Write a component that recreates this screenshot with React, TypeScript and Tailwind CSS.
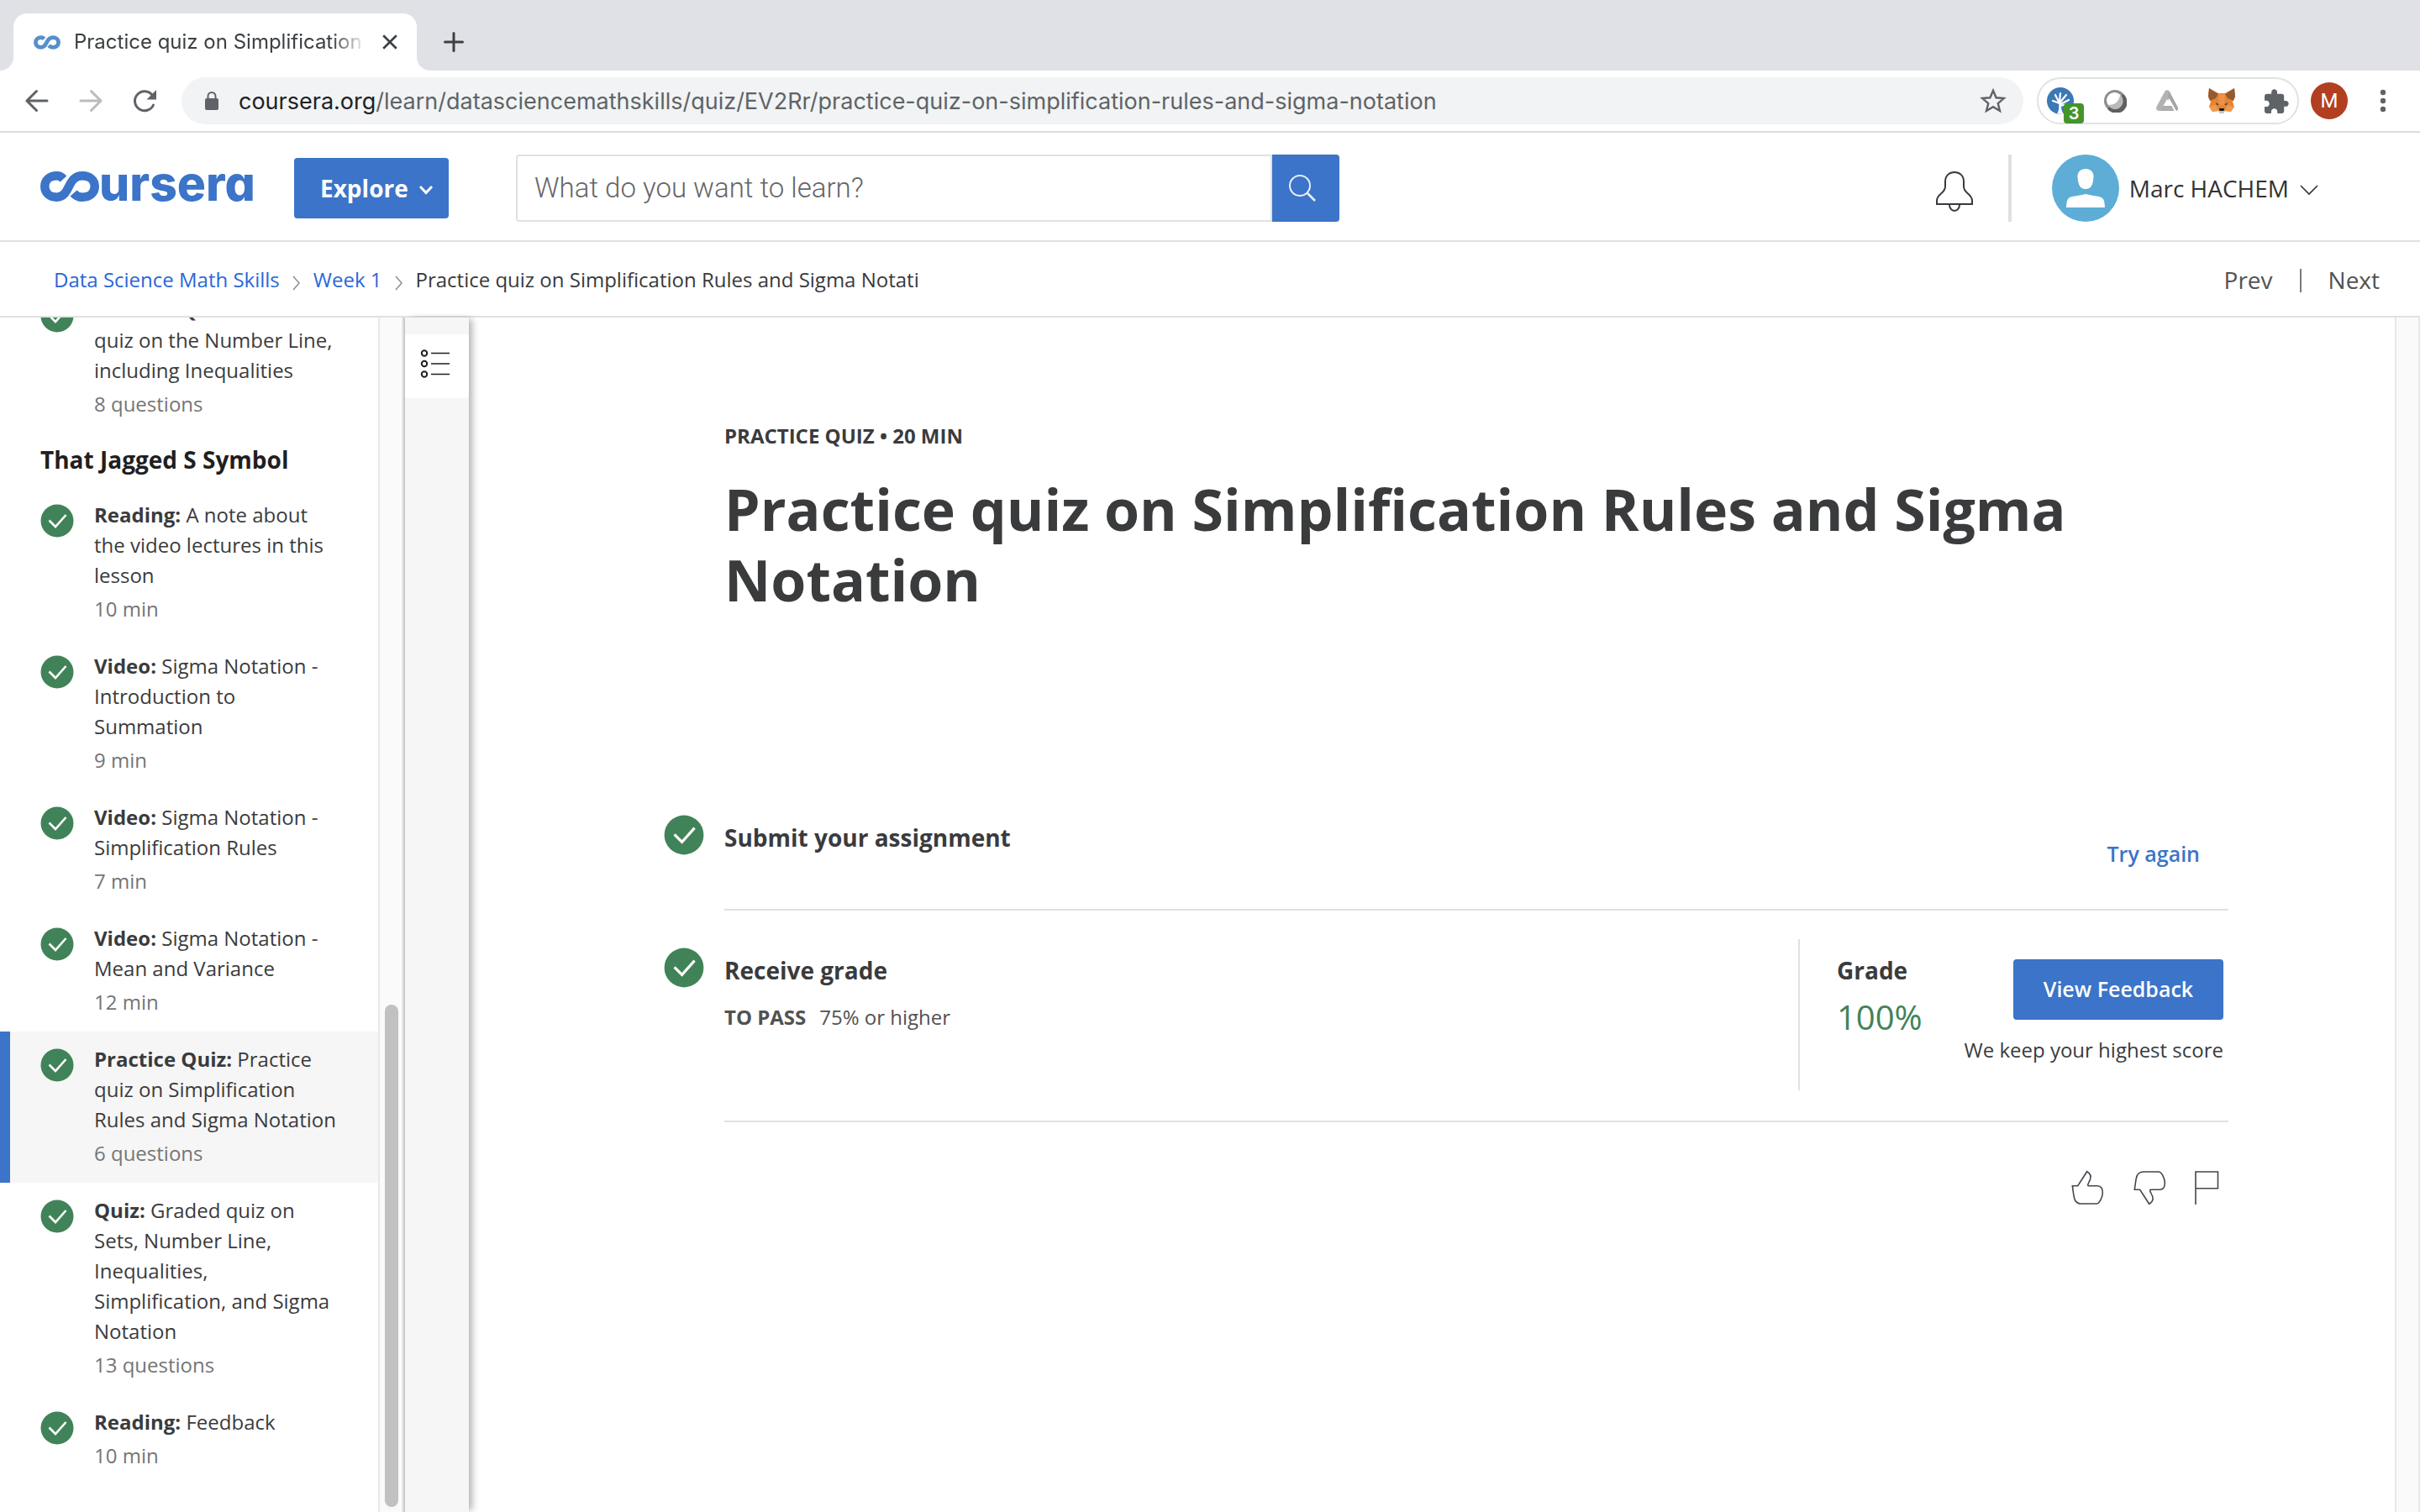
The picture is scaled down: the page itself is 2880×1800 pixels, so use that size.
import React from "react";

type Lesson = { kind: string; title: string; meta: string; active?: boolean };

const previousLesson: Lesson = {
  kind: "Practice Quiz:",
  title: "Practice quiz on the Number Line, including Inequalities",
  meta: "8 questions",
};

const lessons: Lesson[] = [
  { kind: "Reading:", title: "A note about the video lectures in this lesson", meta: "10 min" },
  { kind: "Video:", title: "Sigma Notation - Introduction to Summation", meta: "9 min" },
  { kind: "Video:", title: "Sigma Notation - Simplification Rules", meta: "7 min" },
  { kind: "Video:", title: "Sigma Notation - Mean and Variance", meta: "12 min" },
  {
    kind: "Practice Quiz:",
    title: "Practice quiz on Simplification Rules and Sigma Notation",
    meta: "6 questions",
    active: true,
  },
  {
    kind: "Quiz:",
    title: "Graded quiz on Sets, Number Line, Inequalities, Simplification, and Sigma Notation",
    meta: "13 questions",
  },
  { kind: "Reading:", title: "Feedback", meta: "10 min" },
];

function InfinityMark({ className }: { className: string }) {
  return (
    <svg viewBox="0 0 70 36" className={className} fill="none" stroke="currentColor" strokeWidth="10.500" aria-hidden="true">
      <path d="M27.5 9C25 6.300 22.5 5.300 19.5 5.300C11 5.300 5.300 10.500 5.300 18C5.300 25.5 11 30.700 19.5 30.700C27.500 30.700 30.5 25 34 18C37.5 11 41 5.300 50 5.300C59 5.300 64.700 10.5 64.700 18C64.700 25.5 59 30.700 50 30.700C45.5 30.700 42.5 29.5 39.5 26" />
    </svg>
  );
}

function CheckCircle({ className }: { className: string }) {
  return (
    <svg viewBox="0 0 40 40" className={className} role="img" aria-label="Completed">
      <circle cx="20" cy="20" r="19.5" fill="#418358" />
      <path d="M10.5 19.5L18 27L30.5 13" fill="none" stroke="#fff" strokeWidth="2.6" />
    </svg>
  );
}

function TabStrip() {
  return (
    <div className="flex h-[84px] shrink-0 items-end bg-[#dfe1e6]">
      <div className="size-4 bg-white">
        <div className="size-4 rounded-br-2xl bg-[#dfe1e6]" />
      </div>
      <div className="flex h-[68px] w-[480px] items-center rounded-t-2xl bg-white pr-4 pl-6">
        <InfinityMark className="h-[17px] w-8 text-[#5590cc]" />
        <span className="ml-4 flex-1 overflow-hidden whitespace-nowrap font-[Inter] text-2xl text-[#3c4043] [mask-image:linear-gradient(to_right,#000_88%,transparent)]">
          Practice quiz on Simplification Rules
        </span>
        <button type="button" aria-label="Close tab" className="ml-3 p-1">
          <svg viewBox="0 0 20 20" className="size-6" stroke="#3c4043" strokeWidth="2.2">
            <path d="M3.500 3.500L16.500 16.500M16.500 3.500L3.500 16.500" />
          </svg>
        </button>
      </div>
      <div className="size-4 bg-white">
        <div className="size-4 rounded-bl-2xl bg-[#dfe1e6]" />
      </div>
      <button type="button" aria-label="New tab" className="mb-[22px] ml-4">
        <svg viewBox="0 0 24 24" className="size-6" stroke="#3c4043" strokeWidth="3" strokeLinecap="round">
          <path d="M12 1.5V22.500M1.5 12H22.500" />
        </svg>
      </button>
    </div>
  );
}

function Extensions() {
  return (
    <div className="ml-4 flex h-14 w-[312px] items-center justify-between rounded-full border-2 border-[#e1e2e4] pr-[10px] pl-[10px]">
      <button type="button" aria-label="Extension with 3 items" className="relative">
        <svg viewBox="0 0 32 32" className="size-8">
          <circle cx="16" cy="16" r="16" fill="#3a78b8" />
          <path
            d="M15 19L7 16M14.500 18L10 9M15 17L16 7M15.500 18L23 9M16 20L26 15M16 22L24 20"
            fill="none"
            stroke="#fff"
            strokeWidth="2.2"
            strokeLinecap="round"
          />
          <path d="M12 31.500C15 27 14 22 14.500 18H17C16.500 23 17 28 20 32Z" fill="#fff" />
        </svg>
        <span className="absolute top-[19px] left-5 flex h-6 w-6 items-center justify-center rounded bg-[#43952b] font-[Inter] text-xl font-semibold text-white">
          3
        </span>
      </button>
      <button type="button" aria-label="Ring extension">
        <svg viewBox="0 0 28 28" className="size-7">
          <circle cx="14" cy="14" r="13" fill="#8d8d8d" />
          <path d="M24 6A13 13 0 1 1 5 23.500Z" fill="#5f5f5f" />
          <circle cx="13.500" cy="13.500" r="9.500" fill="#fff" />
          <path d="M20 7A9.500 9.500 0 1 1 5.500 18.500C13 20 19 15 20 7Z" fill="#b9b9b9" />
        </svg>
      </button>
      <button type="button" aria-label="Drive extension">
        <svg viewBox="0 0 28 28" className="size-7">
          <path d="M11.500 2.500Q14 0 16.500 2.500L19 7L8 26H4Q0 25 1.500 21Z" fill="#b2b2b2" />
          <path d="M16.500 2.500L27 22Q27.500 25 25 26L15 8.500Z" fill="#a5a5a5" />
          <path d="M10 20H19.500L22.500 26H5.500Z" fill="#adadad" />
          <path d="M14 12L18.500 20H9.500Z" fill="#fff" />
        </svg>
      </button>
      <button type="button" aria-label="Fox wallet">
        <svg viewBox="0 0 32 30" className="h-[30px] w-8">
          <path d="M1 0L12 6H20L31 0L32 11L29 16L31 22L27 28L20 27L18 30H14L12 27L5 28L1 22L3 16L0 11Z" fill="#e58434" />
          <path d="M1 0L12 7L9 12L2 15L0 9Z" fill="#945a31" />
          <path d="M31 0L20 7L23 12L30 15L32 9Z" fill="#945a31" />
          <path d="M12 7H20L19 20H13Z" fill="#ef9146" />
          <path d="M1 22L9 20L12 27L5 28ZM31 22L23 20L20 27L27 28Z" fill="#f09a50" />
          <path d="M9 17L13 19.500L10 20ZM23 17L19 19.500L22 20Z" fill="#3b3f4c" />
          <path d="M12 26H20L18 30H14Z" fill="#d5c4b6" />
          <path d="M13 24H19L18.500 27H13.500Z" fill="#17120e" />
        </svg>
      </button>
      <button type="button" aria-label="Extensions">
        <svg viewBox="1.500 0 21.500 22" className="size-[30px]" fill="#5f6368">
          <path d="M20.500 11H19V7c0-1.100-.9-2-2-2h-4V3.500C13 2.120 11.880 1 10.500 1S8 2.120 8 3.500V5H4c-1.100 0-1.990.9-1.990 2v3.800H3.500c1.490 0 2.700 1.210 2.700 2.700s-1.210 2.700-2.700 2.700H2V20c0 1.100.9 2 2 2h3.800v-1.500c0-1.490 1.210-2.700 2.700-2.700 1.490 0 2.700 1.210 2.700 2.700V22H17c1.100 0 2-.9 2-2v-4h1.500c1.380 0 2.500-1.120 2.500-2.500S21.880 11 20.500 11z" />
        </svg>
      </button>
    </div>
  );
}

function Toolbar() {
  return (
    <div className="flex h-[74px] shrink-0 items-center border-b-2 border-[#dadce1] pr-[30px] pl-7">
      <div className="flex gap-8">
        <button type="button" aria-label="Back">
          <svg viewBox="0 0 32 32" className="size-8" fill="none" stroke="#5f6368" strokeWidth="3" strokeLinecap="round">
            <path d="M28 16H4M15.500 4.500L4 16L15.500 27.500" />
          </svg>
        </button>
        <button type="button" aria-label="Forward">
          <svg viewBox="0 0 32 32" className="size-8" fill="none" stroke="#babcbe" strokeWidth="3" strokeLinecap="round">
            <path d="M4 16H28M16.500 4.500L28 16L16.500 27.500" />
          </svg>
        </button>
        <button type="button" aria-label="Reload">
          <svg viewBox="0 0 32 32" className="size-8" fill="none" stroke="#5f6368" strokeWidth="3" strokeLinecap="round">
            <path d="M26.500 21A11.500 11.500 0 1 1 24.500 8.500" />
            <path d="M30 3V14.500H18.500Z" fill="#5f6368" stroke="none" />
          </svg>
        </button>
      </div>
      <div className="ml-7 flex h-14 flex-1 items-center rounded-full bg-[#f1f3f4] pr-5 pl-6">
        <svg viewBox="0 0 24 24" className="size-6" aria-hidden="true">
          <rect x="4" y="9" width="16" height="14" rx="2" fill="#5f6368" />
          <path d="M7.500 10V6.500a4.500 4.500 0 0 1 9 0V10" fill="none" stroke="#5f6368" strokeWidth="2" />
        </svg>
        <a href="#address" className="ml-5 flex-1 pt-0.5 whitespace-nowrap font-[Inter] text-[27px] text-[#606366]">
          <span className="text-[#202124]">coursera.org</span>
          /learn/datasciencemathskills/quiz/EV2Rr/practice-quiz-on-simplification-rules-and-sigma-notation
        </a>
        <button type="button" aria-label="Bookmark this page">
          <svg viewBox="0 0 24 24" className="size-8" fill="none" stroke="#5f6368" strokeWidth="1.800">
            <path d="M12 2.800L14.700 9.200L21.600 9.800L16.300 14.300L18 21L12 17.400L6 21L7.700 14.300L2.400 9.800L9.300 9.200Z" />
          </svg>
        </button>
      </div>
      <Extensions />
      <button type="button" aria-label="Profile" className="ml-[14px] flex size-11 items-center justify-center rounded-full bg-[#b13f20] font-[Roboto] text-2xl text-white">
        M
      </button>
      <button type="button" aria-label="Browser menu" className="ml-7">
        <svg viewBox="0 0 28 28" className="size-7" fill="#5f6368">
          <circle cx="14" cy="4" r="3.200" />
          <circle cx="14" cy="14" r="3.200" />
          <circle cx="14" cy="24" r="3.200" />
        </svg>
      </button>
    </div>
  );
}

function SiteHeader() {
  return (
    <header className="flex h-[130px] shrink-0 items-center border-b-2 border-[#e1e1e1] pt-1 pl-12">
      <a href="#home" aria-label="coursera" className="flex items-center pb-1 text-[#3b74c8]">
        <InfinityMark className="h-9 w-[70px]" />
        <span className="flex h-9 w-[184px] items-center pb-[6px] font-[Inter] text-[57px] leading-[52px] font-extrabold [font-feature-settings:'cv11']">ursera</span>
      </a>
      <button type="button" className="ml-12 flex h-[72px] w-[184px] items-center justify-between rounded bg-[#3b74c8] pr-[18px] pl-[31px] text-[28px] font-bold text-white">
        Explore
        <svg viewBox="0 0 18 18" className="mt-1 size-[18px]" fill="none" stroke="#fff" strokeWidth="3">
          <path d="M2 5L9 12.500L16 5" />
        </svg>
      </button>
      <form className="ml-20 flex h-20 w-[980px]" role="search">
        <input
          type="search"
          aria-label="What do you want to learn?"
          placeholder="What do you want to learn?"
          className="min-w-0 flex-1 rounded-l border-2 border-[#e1e1e1] px-5 font-[Roboto] text-[33px] font-light outline-none placeholder:text-[#666]"
        />
        <button type="button" aria-label="Search" className="flex w-20 items-center justify-center rounded-r bg-[#3b74c8] pr-2">
          <svg viewBox="0 0 32 32" className="size-8" fill="none" stroke="#e8eef8" strokeWidth="2">
            <circle cx="13" cy="13" r="12" />
            <path d="M21.500 21.500L31 31" strokeWidth="2.600" />
          </svg>
        </button>
      </form>
      <button type="button" aria-label="Notifications" className="ml-auto mt-2">
        <svg viewBox="0 0 44 48" className="h-12 w-11" fill="none" stroke="#373a3f" strokeWidth="2">
          <path d="M1 39V35C1 31 3 29 6 26.500C9 24 11 22 11 18V12C11 5 16 1 22 1S33 5 33 12V18C33 22 35 24 38 26.500C41 29 43 31 43 35V39Z" />
          <path d="M16 40A6 7 0 0 0 28 40" />
        </svg>
      </button>
      <div className="mr-12 ml-[42px] h-20 w-1 bg-[#e0e0e0]" />
      <button type="button" className="mr-[120px] flex items-center text-[28px] text-[#333]">
        <svg viewBox="0 0 80 80" className="size-20" aria-hidden="true">
          <circle cx="40" cy="40" r="40" fill="#5dadd7" />
          <path d="M40 17C46 17 50 21 49.500 27C49 33 48 41 40 41S31 33 30.500 27C30 21 34 17 40 17Z" fill="#fff" />
          <path d="M17 63C17.500 55 18 51.500 24 50L33 48.500L40 47L47 48.500L56 50C62 51.500 62.500 55 63 63Z" fill="#fff" />
        </svg>
        <span className="ml-3">Marc HACHEM</span>
        <svg viewBox="0 0 24 24" className="mt-1 ml-3 size-6" fill="none" stroke="#333" strokeWidth="1.600">
          <path d="M2 7L12 17L22 7" />
        </svg>
      </button>
    </header>
  );
}

function CrumbArrow() {
  return (
    <svg viewBox="0 0 12 20" className="mx-[14px] mt-2 h-5 w-3" fill="none" stroke="#8a8a8a" strokeWidth="1.400" aria-hidden="true">
      <path d="M2 2L9 10L2 18" />
    </svg>
  );
}

function Breadcrumbs() {
  return (
    <nav className="flex h-[90px] shrink-0 items-center border-b-2 border-[#e1e1e1] pt-0.5 pr-12 pl-16 text-2xl">
      <a href="#course" className="text-[#2a67d8]">Data Science Math Skills</a>
      <CrumbArrow />
      <a href="#week" className="text-[#2a67d8]">Week 1</a>
      <CrumbArrow />
      <span className="text-[#373a3c]">Practice quiz on Simplification Rules and Sigma Notati</span>
      <div className="ml-auto flex items-center pt-0.5 text-[28px] text-[#525252]">
        <a href="#prev">Prev</a>
        <span className="mx-8 h-7 w-0.5 bg-[#7c7c7c]" />
        <a href="#next">Next</a>
      </div>
    </nav>
  );
}

function LessonItem({ lesson }: { lesson: Lesson }) {
  return (
    <li>
      <a
        href="#lesson"
        className={
          lesson.active
            ? "flex border-l-12 border-[#3b74c8] bg-[#f6f6f6] pt-[15px] pr-12 pb-[17px] pl-9 text-2xl leading-9"
            : "flex border-l-12 border-transparent pt-[15px] pr-12 pb-[17px] pl-9 text-2xl leading-9"
        }
      >
        <CheckCircle className="mt-[5px] size-10 shrink-0" />
        <span className="ml-6 flex flex-col gap-1">
          <span className="text-[#3a3b3d]">
            <b className="font-bold">{lesson.kind}</b> {lesson.title}
          </span>
          <span className="text-[#757575]">{lesson.meta}</span>
        </span>
      </a>
    </li>
  );
}

function Sidebar() {
  return (
    <aside className="flex w-[482px] shrink-0 border-r-2 border-[#cacaca]">
      <div className="flex flex-1 flex-col justify-end overflow-hidden pb-8">
        <ul className="shrink-0">
          <LessonItem lesson={previousLesson} />
        </ul>
        <h2 className="h-16 shrink-0 pt-[11px] pl-12 text-[28px] leading-10 font-bold text-[#1f1f1f]">That Jagged S Symbol</h2>
        <ul className="shrink-0">
          {lessons.map((lesson) => (
            <LessonItem key={lesson.title} lesson={lesson} />
          ))}
        </ul>
      </div>
      <div className="flex w-[30px] flex-col justify-end border-x-2 border-[#e8e8e8] bg-[#fafafa] pr-1 pb-[6px] pl-[6px]">
        <div className="h-[598px] w-4 rounded-full bg-[#c1c1c1]" />
      </div>
    </aside>
  );
}

function StepRows() {
  return (
    <section>
      <div className="flex">
        <CheckCircle className="size-12 shrink-0" />
        <div className="ml-6 flex h-[114px] flex-1 justify-between border-b-2 border-[#e1e1e1]">
          <h2 className="pt-[7px] text-[28px] leading-10 font-bold">Submit your assignment</h2>
          <a href="#retry" className="pt-[26px] pr-[34px] text-[25px] leading-10 font-semibold text-[#3b74c8]">Try again</a>
        </div>
      </div>
      <div className="flex">
        <CheckCircle className="mt-11 size-12 shrink-0" />
        <div className="ml-6 flex h-[252px] flex-1 justify-between border-b-2 border-[#e1e1e1]">
          <div className="pt-[51px]">
            <h2 className="text-[28px] leading-10 font-bold">Receive grade</h2>
            <p className="mt-5 text-2xl text-[#525252]">
              <b className="mr-4 font-bold">TO PASS</b>75% or higher
            </p>
          </div>
          <div className="mt-[34px] flex h-[180px] w-[512px] justify-between border-l-2 border-[#e1e1e1] pr-[6px] pl-11">
            <div className="pt-[17px]">
              <h2 className="text-[28px] leading-10 font-bold">Grade</h2>
              <p className="mt-3 text-[40px] leading-12 text-[#418358]">100%</p>
            </div>
            <div className="flex flex-col items-end pt-6">
              <button type="button" className="h-[72px] w-[250px] rounded bg-[#3b74c8] text-[25px] font-semibold text-white">
                View Feedback
              </button>
              <p className="mt-5 text-2xl whitespace-nowrap">We keep your highest score</p>
            </div>
          </div>
        </div>
      </div>
      <div className="mt-14 flex justify-end gap-[30px] pr-[10px]">
        <button type="button" aria-label="Like">
          <svg viewBox="0 0 44 44" className="size-11" fill="none" stroke="#42474d" strokeWidth="1.600">
            <path d="M4.300 19.700H10.700L21.700 2.700C25.500 5 27 8 25.500 12C24 16 21 19.700 24 19.700H34C38.500 19.700 40.500 23 40.300 28C40.300 33 36.500 41 33 41H14.700C10 41 7.500 38 6.500 34C5.500 30 5 24 4.300 19.700Z" />
          </svg>
        </button>
        <button type="button" aria-label="Dislike">
          <svg viewBox="0 0 44 44" className="size-11" fill="none" stroke="#42474d" strokeWidth="1.600">
            <path d="M4.300 24.300H10.700L21.700 41.300C25.500 39 27 36 25.500 32C24 28 21 24.300 24 24.300H34C38.500 24.300 40.500 21 40.300 16C40.300 11 36.500 3 33 3H14.700C10 3 7.500 6 6.500 10C5.500 14 5 20 4.300 24.300Z" />
          </svg>
        </button>
        <button type="button" aria-label="Report">
          <svg viewBox="0 0 32 44" className="h-11 w-8" fill="none" stroke="#42474d" strokeWidth="1.600">
            <path d="M3 42V3H29.500V22.700H3" />
          </svg>
        </button>
      </div>
    </section>
  );
}

export default function App() {
  return (
    <div className="flex h-screen flex-col overflow-hidden bg-white font-['Open_Sans',sans-serif] text-[#3a3b3d]">
      <TabStrip />
      <Toolbar />
      <SiteHeader />
      <Breadcrumbs />
      <div className="flex min-h-0 flex-1">
        <Sidebar />
        <div className="relative z-10 w-[76px] shrink-0 bg-[#f6f6f6] pt-5 shadow-[6px_0_8px_-2px_rgba(0,0,0,0.3)]">
          <button type="button" aria-label="Course outline" className="flex h-[76px] w-full items-center justify-center rounded bg-white pr-1 pb-[6px]">
            <svg viewBox="0 0 36 36" className="size-9" fill="none" stroke="#1f1f1f" strokeWidth="2">
              <circle cx="5" cy="5.500" r="3.200" />
              <circle cx="5" cy="18" r="3.200" />
              <circle cx="5" cy="30.500" r="3.200" />
              <path d="M13 5.500H35M13 18H35M13 30.500H35" strokeWidth="1.600" />
            </svg>
          </button>
        </div>
        <main className="flex-1 pt-[125px] pr-[198px] pl-[232px]">
          <div className="ml-[72px]">
            <p className="text-2xl font-bold">PRACTICE QUIZ • 20 MIN</p>
            <h1 className="mt-[29px] mb-[238px] text-[68px] leading-[84px] font-bold">
              Practice quiz on Simplification Rules and Sigma Notation
            </h1>
          </div>
          <StepRows />
        </main>
        <div className="w-[30px] shrink-0 border-x-2 border-[#e8e8e8] bg-[#fafafa]" />
      </div>
    </div>
  );
}
